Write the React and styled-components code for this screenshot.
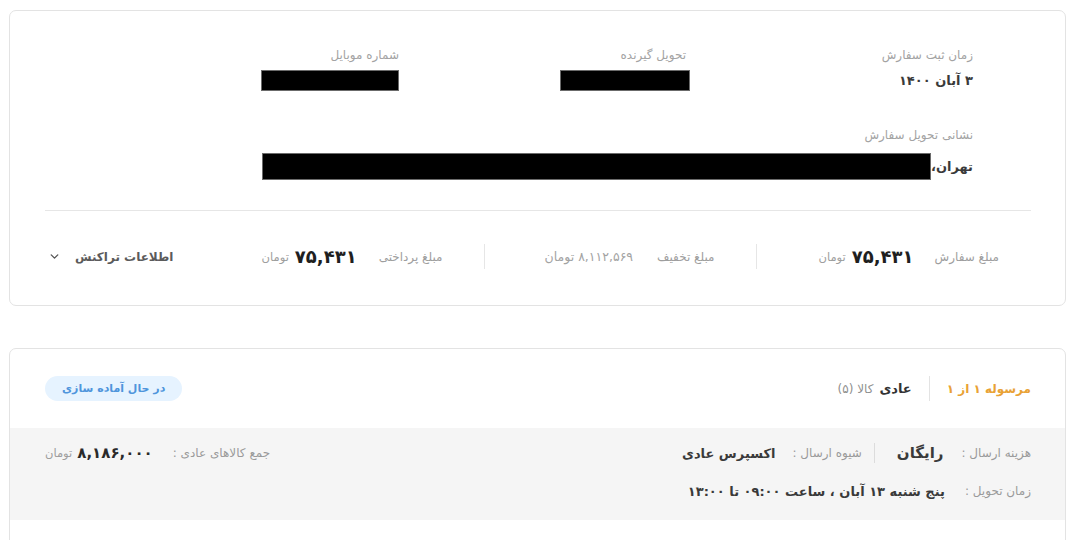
import styled, { createGlobalStyle } from "styled-components"
import { ChevronDown } from "lucide-react"

const GlobalStyle = createGlobalStyle`
	html, body {
		margin: 0;
		padding: 0;
		background: #ffffff;
		overflow: hidden;
	}
	* {
		box-sizing: border-box;
	}
`

const Page = styled.div`
	direction: rtl;
	font-family: "DejaVu Sans", "Noto Sans", sans-serif;
	color: #333;
	padding: 10px 14px 0 9px;
	width: 1080px;
`

const Card = styled.div`
	border: 1px solid #e3e3e3;
	border-radius: 7px;
	background: #fff;
	height: ${(p) => p.$height}px;
	margin-bottom: 42px;
	overflow: hidden;
`

const InfoGrid = styled.div`
	display: grid;
	grid-template-columns: repeat(3, 287px);
	row-gap: 37px;
	padding: 36px 92px 0 32px;
`

const Field = styled.div`
	display: flex;
	flex-direction: column;
	gap: ${(p) => (p.$wide ? 10 : 7)}px;
	grid-column: ${(p) => (p.$wide ? "1 / -1" : "auto")};
`

const Label = styled.span`
	font-size: 12px;
	line-height: 16px;
	color: #a3a3a3;
`

const Value = styled.div`
	display: flex;
	align-items: center;
	font-size: 13px;
	font-weight: bold;
	color: #3a3a3a;
	height: ${(p) => p.$h || 20}px;
`

const Redacted = styled.span`
	display: inline-block;
	width: ${(p) => p.$w}px;
	height: ${(p) => p.$h}px;
	background: #000;
	border: 1px solid #6b6b6b;
	margin-right: ${(p) => p.$mr || 0}px;
`

const Divider = styled.div`
	height: 1px;
	background: #e6e6e6;
	margin: 31px 34px 0 35px;
`

const SummaryRow = styled.div`
	display: flex;
	align-items: center;
	padding: 33px 66px 0 38px;
	height: 25px;
	box-sizing: content-box;
`

const SummaryItem = styled.div`
	display: flex;
	align-items: center;
	height: 25px;
	padding-left: ${(p) => p.$pl}px;
	& + & {
		border-right: 1px solid #e6e6e6;
		padding-right: 41px;
	}
`

const SumLabel = styled.span`
	font-size: 12px;
	color: #9e9e9e;
	margin-left: ${(p) => p.$gap || 20}px;
`

const Amount = styled.span`
	font-size: 18px;
	font-weight: bold;
	color: #1f1f1f;
	margin-left: 6px;
`

const Unit = styled.span`
	font-size: 11.5px;
	color: #9e9e9e;
`

const Muted = styled.span`
	font-size: 12.5px;
	color: #a3a3a3;
`

const TxLink = styled.button`
	margin-right: auto;
	display: flex;
	align-items: center;
	gap: 14px;
	background: none;
	border: none;
	padding: 0;
	font-family: inherit;
	font-size: 12px;
	font-weight: bold;
	color: #5b5b5b;
	cursor: pointer;
`

const ShipHeader = styled.div`
	display: flex;
	align-items: center;
	justify-content: space-between;
	padding: 27px 34px 27px 35px;
`

const ShipTitle = styled.div`
	display: flex;
	align-items: center;
`

const Orange = styled.span`
	font-size: 12px;
	font-weight: bold;
	color: #e9a235;
	padding-left: 17px;
	border-left: 1px solid #e3e3e3;
	height: 25px;
	display: flex;
	align-items: center;
`

const Kind = styled.span`
	font-size: 13px;
	font-weight: bold;
	color: #333;
	margin: 0 17px 0 6px;
`

const Count = styled.span`
	font-size: 12px;
	color: #8f8f8f;
`

const Pill = styled.span`
	display: inline-flex;
	align-items: center;
	height: 25px;
	padding: 0 17px;
	border-radius: 13px;
	background: #e6f3ff;
	color: #4f95dc;
	font-size: 11px;
	font-weight: bold;
`

const GraySection = styled.div`
	background: #f5f5f5;
	padding: 13px 34px 17px 35px;
	display: flex;
	flex-direction: column;
	gap: 14px;
`

const ShipRow = styled.div`
	display: flex;
	align-items: center;
	height: 24px;
`

const ShipLabel = styled.span`
	font-size: 12px;
	color: #9a9a9a;
	margin-left: ${(p) => p.$gap || 18}px;
`

const ShipValue = styled.span`
	font-size: ${(p) => p.$size || 13}px;
	font-weight: bold;
	color: #3a3a3a;
`

const Sep = styled.span`
	width: 1px;
	height: 20px;
	background: #dcdcdc;
	margin: 0 22px 0 12px;
`

const Total = styled.div`
	margin-right: auto;
	display: flex;
	align-items: center;
`

const TotalAmount = styled.span`
	font-size: 15px;
	font-weight: bold;
	color: #2a2a2a;
	margin-left: 5px;
`

export default function App() {
	return (
		<Page>
			<GlobalStyle />
			<Card $height={296}>
				<InfoGrid>
					<Field>
						<Label>زمان ثبت سفارش</Label>
						<Value>۳ آبان ۱۴۰۰</Value>
					</Field>
					<Field>
						<Label>تحویل گیرنده</Label>
						<Value><Redacted $w={130} $h={21} $mr={-4} /></Value>
					</Field>
					<Field>
						<Label>شماره موبایل</Label>
						<Value><Redacted $w={138} $h={21} /></Value>
					</Field>
					<Field $wide>
						<Label>نشانی تحویل سفارش</Label>
						<Value $h={26}>
							تهران،
							<Redacted $w={669} $h={27} />
						</Value>
					</Field>
				</InfoGrid>
				<Divider />
				<SummaryRow>
					<SummaryItem $pl={62}>
						<SumLabel $gap={21}>مبلغ سفارش</SumLabel>
						<Amount>۷۵,۴۳۱</Amount>
						<Unit>تومان</Unit>
					</SummaryItem>
					<SummaryItem $pl={60}>
						<SumLabel $gap={24}>مبلغ تخفیف</SumLabel>
						<Muted>۸,۱۱۲,۵۶۹ تومان</Muted>
					</SummaryItem>
					<SummaryItem $pl={0}>
						<SumLabel $gap={22}>مبلغ پرداختی</SumLabel>
						<Amount>۷۵,۴۳۱</Amount>
						<Unit>تومان</Unit>
					</SummaryItem>
					<TxLink>
						اطلاعات تراکنش
						<ChevronDown size={13} strokeWidth={2.5} color="#555" />
					</TxLink>
				</SummaryRow>
			</Card>
			<Card $height={240}>
				<ShipHeader>
					<ShipTitle>
						<Orange>مرسوله ۱ از ۱</Orange>
						<Kind>عادی</Kind>
						<Count>کالا (۵)</Count>
					</ShipTitle>
					<Pill>در حال آماده سازی</Pill>
				</ShipHeader>
				<GraySection>
					<ShipRow>
						<ShipLabel>هزینه ارسال :</ShipLabel>
						<ShipValue $size={15}>رایگان</ShipValue>
						<Sep />
						<ShipLabel $gap={17}>شیوه ارسال :</ShipLabel>
						<ShipValue>اکسپرس عادی</ShipValue>
						<Total>
							<ShipLabel $gap={20}>جمع کالاهای عادی :</ShipLabel>
							<TotalAmount>۸,۱۸۶,۰۰۰</TotalAmount>
							<Unit>تومان</Unit>
						</Total>
					</ShipRow>
					<ShipRow>
						<ShipLabel $gap={20}>زمان تحویل :</ShipLabel>
						<ShipValue>پنج شنبه ۱۳ آبان ، ساعت ۰۹:۰۰ تا ۱۳:۰۰</ShipValue>
					</ShipRow>
				</GraySection>
			</Card>
		</Page>
	)
}
